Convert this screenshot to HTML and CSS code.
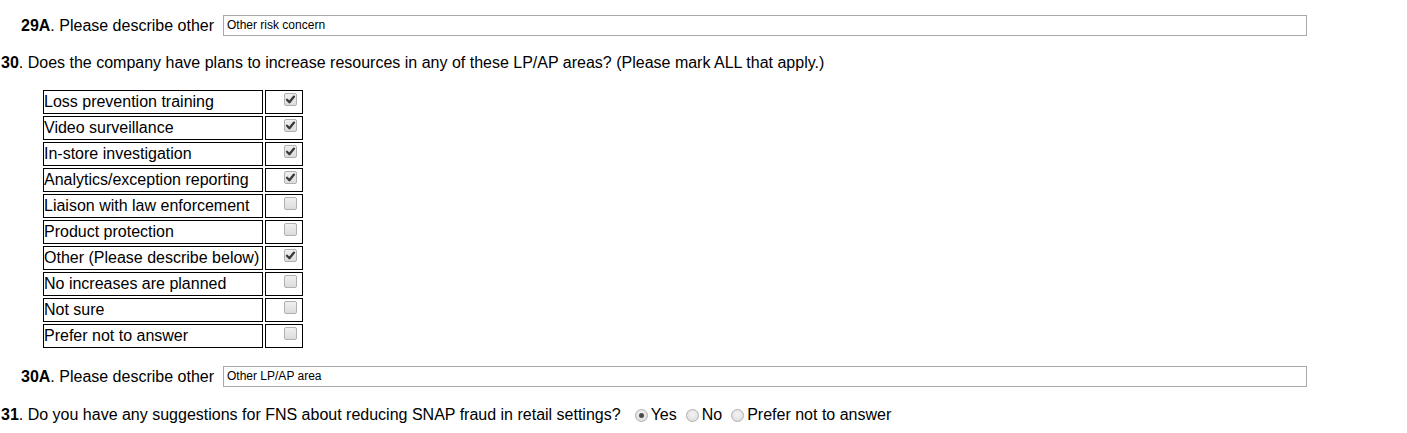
FILE: index.html
```html
<!DOCTYPE html>
<html>
<head>
<meta charset="utf-8">
<link rel="stylesheet" href="styles.css">
</head>
<body>
<div class="sub-q first">
  <span class="q-label"><b>29A</b>. Please describe other</span>
  <span class="text-field">Other risk concern</span>
</div>

<div class="question q30"><b>30</b>. Does the company have plans to increase resources in any of these LP/AP areas? (Please mark ALL that apply.)</div>

<table class="choices">
  <tr><td class="opt">Loss prevention training</td><td class="box"><span class="cb on"><svg viewBox="0 0 13 13" width="13" height="13"><path d="M3 6.8 L5.4 9.2 L10 3.6" /></svg></span></td></tr>
  <tr><td class="opt">Video surveillance</td><td class="box"><span class="cb on"><svg viewBox="0 0 13 13" width="13" height="13"><path d="M3 6.8 L5.4 9.2 L10 3.6" /></svg></span></td></tr>
  <tr><td class="opt">In-store investigation</td><td class="box"><span class="cb on"><svg viewBox="0 0 13 13" width="13" height="13"><path d="M3 6.8 L5.4 9.2 L10 3.6" /></svg></span></td></tr>
  <tr><td class="opt">Analytics/exception reporting</td><td class="box"><span class="cb on"><svg viewBox="0 0 13 13" width="13" height="13"><path d="M3 6.8 L5.4 9.2 L10 3.6" /></svg></span></td></tr>
  <tr><td class="opt">Liaison with law enforcement</td><td class="box"><span class="cb"></span></td></tr>
  <tr><td class="opt">Product protection</td><td class="box"><span class="cb"></span></td></tr>
  <tr><td class="opt">Other (Please describe below)</td><td class="box"><span class="cb on"><svg viewBox="0 0 13 13" width="13" height="13"><path d="M3 6.8 L5.4 9.2 L10 3.6" /></svg></span></td></tr>
  <tr><td class="opt">No increases are planned</td><td class="box"><span class="cb"></span></td></tr>
  <tr><td class="opt">Not sure</td><td class="box"><span class="cb"></span></td></tr>
  <tr><td class="opt">Prefer not to answer</td><td class="box"><span class="cb"></span></td></tr>
</table>

<div class="sub-q second">
  <span class="q-label"><b>30A</b>. Please describe other</span>
  <span class="text-field">Other LP/AP area</span>
</div>

<div class="question q31">
  <span><b>31</b>. Do you have any suggestions for FNS about reducing SNAP fraud in retail settings?</span>
  <span class="radio first-radio on"></span><span class="r-text">Yes</span>
  <span class="radio"></span><span class="r-text">No</span>
  <span class="radio"></span><span class="r-text">Prefer not to answer</span>
</div>
</body>
</html>
```

FILE: styles.css
```css
html, body {
  margin: 0;
  padding: 0;
  background: #ffffff;
}
body {
  font-family: "Liberation Sans", Arial, sans-serif;
  font-size: 16px;
  color: #000000;
  line-height: 18px;
}
.sub-q {
  display: flex;
  align-items: center;
  padding-left: 21px;
}
.sub-q.first {
  margin-top: 15px;
}
.sub-q.second {
  margin-top: 16px;
}
.q-label {
  margin-right: 9px;
}
.text-field {
  box-sizing: border-box;
  width: 1084px;
  height: 21px;
  border: 1px solid #a9a9a9;
  font-size: 12px;
  line-height: 19px;
  padding-left: 3px;
  color: #000;
}
.question {
  padding-left: 1px;
}
.q30 {
  margin-top: 18px;
}
.choices {
  margin-top: 16px;
  margin-left: 41px;
  border-collapse: separate;
  border-spacing: 2px;
}
.choices td {
  border: 1px solid #000;
  padding: 0;
  height: 22px;
  vertical-align: top;
}
.choices td.opt {
  width: 218px;
  line-height: 22px;
  white-space: nowrap;
}
.choices td.box {
  width: 36px;
}
.cb {
  display: block;
  box-sizing: border-box;
  width: 13px;
  height: 13px;
  margin: 2px 0 0 18px;
  border: 1px solid #b0b0b0;
  border-radius: 2px;
  background: linear-gradient(#f0f0f0, #dcdcdc);
  position: relative;
}
.cb svg {
  position: absolute;
  left: -1px;
  top: -1px;
}
.cb svg path {
  fill: none;
  stroke: #3a3a3a;
  stroke-width: 2.3;
  stroke-linecap: round;
  stroke-linejoin: round;
}
.q31 {
  margin-top: 19px;
  display: flex;
  align-items: center;
}
.radio {
  box-sizing: border-box;
  width: 13px;
  height: 13px;
  border-radius: 50%;
  border: 1px solid #b0b0b0;
  background: radial-gradient(circle at 50% 40%, #f4f4f4, #d8d8d8);
  margin: 1px 3px 0 9px;
  position: relative;
}
.radio.first-radio {
  margin-left: 14px;
}
.radio.on::after {
  content: "";
  position: absolute;
  left: 3px;
  top: 3px;
  width: 5px;
  height: 5px;
  border-radius: 50%;
  background: #4a4a4a;
}
```
